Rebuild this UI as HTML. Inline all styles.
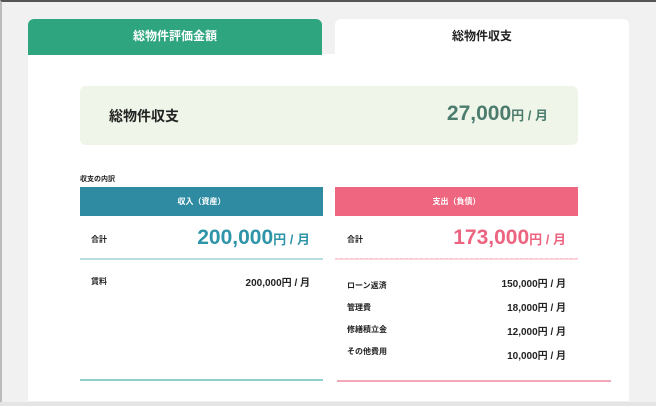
<!DOCTYPE html>
<html><head><meta charset="utf-8"><style>
*{margin:0;padding:0;box-sizing:border-box}
body{width:656px;height:406px;background:#f1f1f1;font-family:"Liberation Sans","Noto Sans CJK JP",sans-serif;position:relative;overflow:hidden;color:#222}
.a{position:absolute}
.frame{left:0;top:0;width:656px;height:406px;border-top:2px solid #555;border-left:2px solid #bbb}
.card{left:28px;top:54px;width:601px;height:347px;background:#fff}
.t1{left:28px;top:19px;width:294px;height:36px;background:#2fa57f;border-radius:6px 6px 0 0;color:#fff;font-size:12px;font-weight:bold;text-align:center;line-height:34px}
.t2{left:335px;top:19px;width:294px;height:36px;background:#fff;border-radius:6px 6px 0 0;font-size:12px;font-weight:bold;text-align:center;line-height:34px}
.sum{left:80px;top:86px;width:498px;height:59px;background:#eff5e9;border-radius:6px}
.b{font-weight:bold}
.hd{height:29px;color:#fff;font-size:8px;font-weight:bold;text-align:center;line-height:29px}
.it{font-size:8px;font-weight:bold}
.v{font-size:10px;font-weight:bold;text-align:right}
</style></head><body>
<div class="a frame"></div>
<div class="a card"></div>
<div class="a t1">総物件評価金額</div>
<div class="a t2">総物件収支</div>
<div class="a sum"></div>
<div class="a b" style="left:109px;top:106px;font-size:14px">総物件収支</div>
<div class="a b" style="right:108px;top:102px;font-size:21px;color:#4c7c6e">27,000<span style="font-size:13px">円 / 月</span></div>
<div class="a it" style="left:80px;top:174px;font-size:7px">収支の内訳</div>
<div class="a hd" style="left:80px;top:187px;width:243px;background:#2e8ba2">収入（資産）</div>
<div class="a hd" style="left:335px;top:187px;width:243px;background:#ee6680">支出（負債）</div>
<div class="a it" style="left:91px;top:234px">合計</div>
<div class="a b" style="right:346px;top:226px;font-size:21px;color:#2e94a8">200,000<span style="font-size:13px">円 / 月</span></div>
<div class="a" style="left:80px;top:258px;width:243px;height:2px;background:#b9dde0"></div>
<div class="a it" style="left:347px;top:234px">合計</div>
<div class="a b" style="right:90px;top:226px;font-size:21px;color:#ec6480">173,000<span style="font-size:13px">円 / 月</span></div>
<div class="a" style="left:335px;top:258px;width:243px;height:2px;border-top:1px dashed #f7c3cd;background:#fbd9df"></div>
<div class="a it" style="left:91px;top:276px">賃料</div>
<div class="a v" style="right:346px;top:274px">200,000円 / 月</div>
<div class="a it" style="left:347px;top:280px">ローン返済</div>
<div class="a v" style="right:90px;top:275px">150,000円 / 月</div>
<div class="a it" style="left:347px;top:302px">管理費</div>
<div class="a v" style="right:90px;top:299px">18,000円 / 月</div>
<div class="a it" style="left:347px;top:324px">修繕積立金</div>
<div class="a v" style="right:90px;top:323px">12,000円 / 月</div>
<div class="a it" style="left:347px;top:346px">その他費用</div>
<div class="a v" style="right:90px;top:347px">10,000円 / 月</div>
<div class="a" style="left:80px;top:379px;width:243px;height:2px;background:#8fcfcb"></div>
<div class="a" style="left:337px;top:380px;width:274px;height:2px;background:#f4a7b6"></div>
<div class="a" style="left:0;top:402px;width:656px;height:4px;background:#e4e4e4"></div>
</body></html>
